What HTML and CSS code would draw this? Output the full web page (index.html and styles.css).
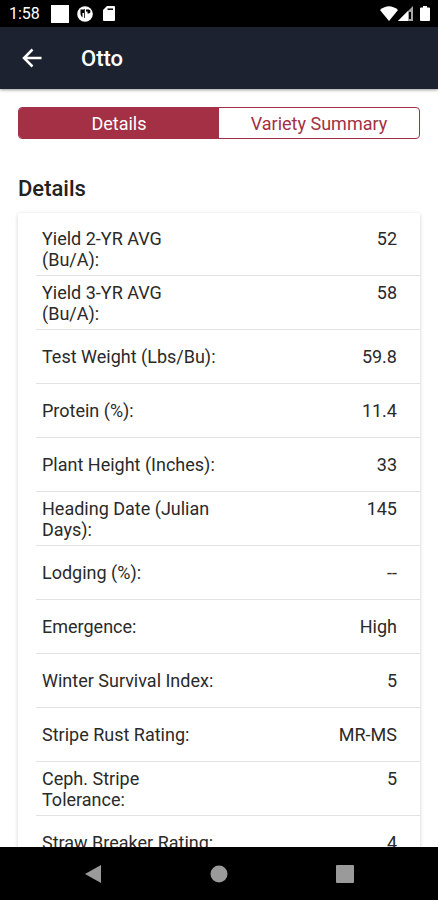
FILE: index.html
```
<!DOCTYPE html>
<html lang="en">
<head>
  <meta charset="UTF-8">
  <meta name="viewport" content="width=device-width, initial-scale=1">
  <title>Otto</title>
  <link rel="stylesheet" href="styles.css">
</head>
<body>
  <div class="status-bar">
    <span class="clock">1:58</span>
    <svg class="status-icon" width="18" height="18" viewBox="0 0 18 18"><path d="M0 0h18v18H0z"/></svg>
    <svg class="status-icon" width="16" height="16" viewBox="0 0 16 16">
      <circle cx="8" cy="8" r="7.800"/>
      <path d="M3.500 3.500H7V7H5.500v4.500a5 5 0 0 1-2-3.500zM9 3.500h2.500a2 2 0 0 1 0 4H10.500V5.500H9z" fill="#000"/>
      <path d="M7.500 3v9" stroke="#000" stroke-width=".8"/>
    </svg>
    <svg class="status-icon sd-card" width="12" height="15" viewBox="0 0 12 15">
      <path d="M4 0h7a1 1 0 0 1 1 1v13a1 1 0 0 1-1 1H1a1 1 0 0 1-1-1V4z"/>
      <path d="M4.500 3.200h5.500" stroke="#000" stroke-width="1.500"/>
    </svg>
    <div class="status-right">
      <svg class="status-icon" width="18" height="15" viewBox="0 0 18 15"><path d="M0 4Q9-3.500 18 4L9 15z"/></svg>
      <svg class="status-icon" width="16" height="15" viewBox="0 0 16 15">
        <path d="M0 15 15 0v15z" opacity=".65"/>
        <path d="M0 15 10 5v10z"/>
        <path d="M12 6v7" stroke="#000" stroke-width="2"/>
      </svg>
      <svg class="status-icon battery" width="10" height="15" viewBox="0 0 10 15"><path d="M3 0h4v1.500h2a1 1 0 0 1 1 1V14a1 1 0 0 1-1 1H1a1 1 0 0 1-1-1V2.500a1 1 0 0 1 1-1h2z"/></svg>
    </div>
  </div>

  <header class="app-bar">
    <button class="back" type="button" aria-label="Back">
      <svg width="20" height="20" viewBox="0 0 20 20"><path d="M19.500 10H2M10.500 1.500 2 10l8.500 8.500" fill="none" stroke="#fff" stroke-width="2.500"/></svg>
    </button>
    <h1>Otto</h1>
  </header>

  <main>
    <div class="tabs">
      <button type="button" class="tab active">Details</button>
      <button type="button" class="tab">Variety Summary</button>
    </div>

    <h2>Details</h2>
    <div class="card">
      <table>
        <tr class="two-line"><th scope="row">Yield 2-YR AVG (Bu/A):</th><td>52</td></tr>
        <tr class="two-line"><th scope="row">Yield 3-YR AVG (Bu/A):</th><td>58</td></tr>
        <tr><th scope="row">Test Weight (Lbs/Bu):</th><td>59.8</td></tr>
        <tr><th scope="row">Protein (%):</th><td>11.4</td></tr>
        <tr><th scope="row">Plant Height (Inches):</th><td>33</td></tr>
        <tr class="two-line"><th scope="row">Heading Date (Julian Days):</th><td>145</td></tr>
        <tr><th scope="row">Lodging (%):</th><td>--</td></tr>
        <tr><th scope="row">Emergence:</th><td>High</td></tr>
        <tr><th scope="row">Winter Survival Index:</th><td>5</td></tr>
        <tr><th scope="row">Stripe Rust Rating:</th><td>MR-MS</td></tr>
        <tr class="two-line"><th scope="row">Ceph. Stripe Tolerance:</th><td>5</td></tr>
        <tr><th scope="row">Straw Breaker Rating:</th><td>4</td></tr>
      </table>
    </div>
  </main>

  <nav class="nav-bar">
    <button type="button" aria-label="Back"><svg width="18" height="20" viewBox="0 0 18 20"><path d="M17 1v18L1 10z"/></svg></button>
    <button type="button" aria-label="Home"><svg width="18" height="18" viewBox="0 0 18 18"><circle cx="9" cy="9" r="8.500"/></svg></button>
    <button type="button" aria-label="Recent apps"><svg width="18" height="18" viewBox="0 0 18 18"><rect width="18" height="18" rx="1"/></svg></button>
  </nav>
</body>
</html>
```
FILE: styles.css
```
* {
  box-sizing: border-box;
}

body {
  margin: 0;
  height: 100vh;
  display: flex;
  flex-direction: column;
  font-family: Roboto, sans-serif;
  background: #fff;
  color: #2a2a2a;
}

button {
  border: none;
  background: none;
  padding: 0;
  font-family: inherit;
  cursor: pointer;
}

svg {
  display: block;
}

.status-bar {
  flex: none;
  display: flex;
  align-items: center;
  height: 27px;
  padding: 0 8px 0 9px;
  background: #000;
  color: #fff;
}

.clock {
  font-size: 16px;
  margin-right: 11px;
}

.status-icon {
  fill: #fff;
  margin-right: 8px;
}

.sd-card {
  margin-left: 2px;
}

.status-right {
  display: flex;
  margin-left: auto;
}

.status-right .status-icon {
  margin-right: 0;
}

.status-right .battery {
  margin-left: 6px;
}

.app-bar {
  flex: none;
  display: flex;
  align-items: center;
  height: 62px;
  padding: 0 22px;
  background: #1c222f;
  color: #fff;
  box-shadow: 0 1px 3px rgba(0,0,0,0.4);
  z-index: 1;
}

.app-bar h1 {
  margin: 0 0 0 39px;
  font-size: 22px;
  font-weight: 500;
}

main {
  flex: 1;
  min-height: 0;
  overflow-y: auto;
  scrollbar-width: none;
  padding: 18px 18px 0;
}

.tabs {
  display: flex;
  height: 32px;
  border: 1px solid #a33045;
  border-radius: 4px;
  overflow: hidden;
}

.tab {
  flex: 1;
  font-size: 18px;
  color: #a33045;
}

.tab.active {
  background: #a33045;
  color: #fff;
}

h2 {
  margin: 37px 0 12px;
  font-size: 22px;
  line-height: 25px;
  font-weight: 500;
  color: #222;
}

.card {
  padding: 9px 0 9px 18px;
  border-radius: 3px;
  box-shadow: 0 1px 4px rgba(0,0,0,0.18);
}

table {
  width: 100%;
  border-collapse: separate;
  border-spacing: 0;
}

th,
td {
  padding: 16px 0;
  border-bottom: 1px solid #e2e2e2;
  font-size: 18px;
  line-height: 21px;
  font-weight: 400;
  vertical-align: top;
}

th {
  width: 48%;
  padding-left: 6px;
  text-align: left;
}

td {
  padding-right: 23px;
  text-align: right;
}

.two-line th,
.two-line td {
  padding-top: 6px;
  padding-bottom: 5px;
}

.nav-bar {
  flex: none;
  display: flex;
  justify-content: space-between;
  align-items: center;
  height: 53px;
  padding: 0 84px;
  background: #000;
}

.nav-bar svg {
  fill: #9a9a9a;
}
```
